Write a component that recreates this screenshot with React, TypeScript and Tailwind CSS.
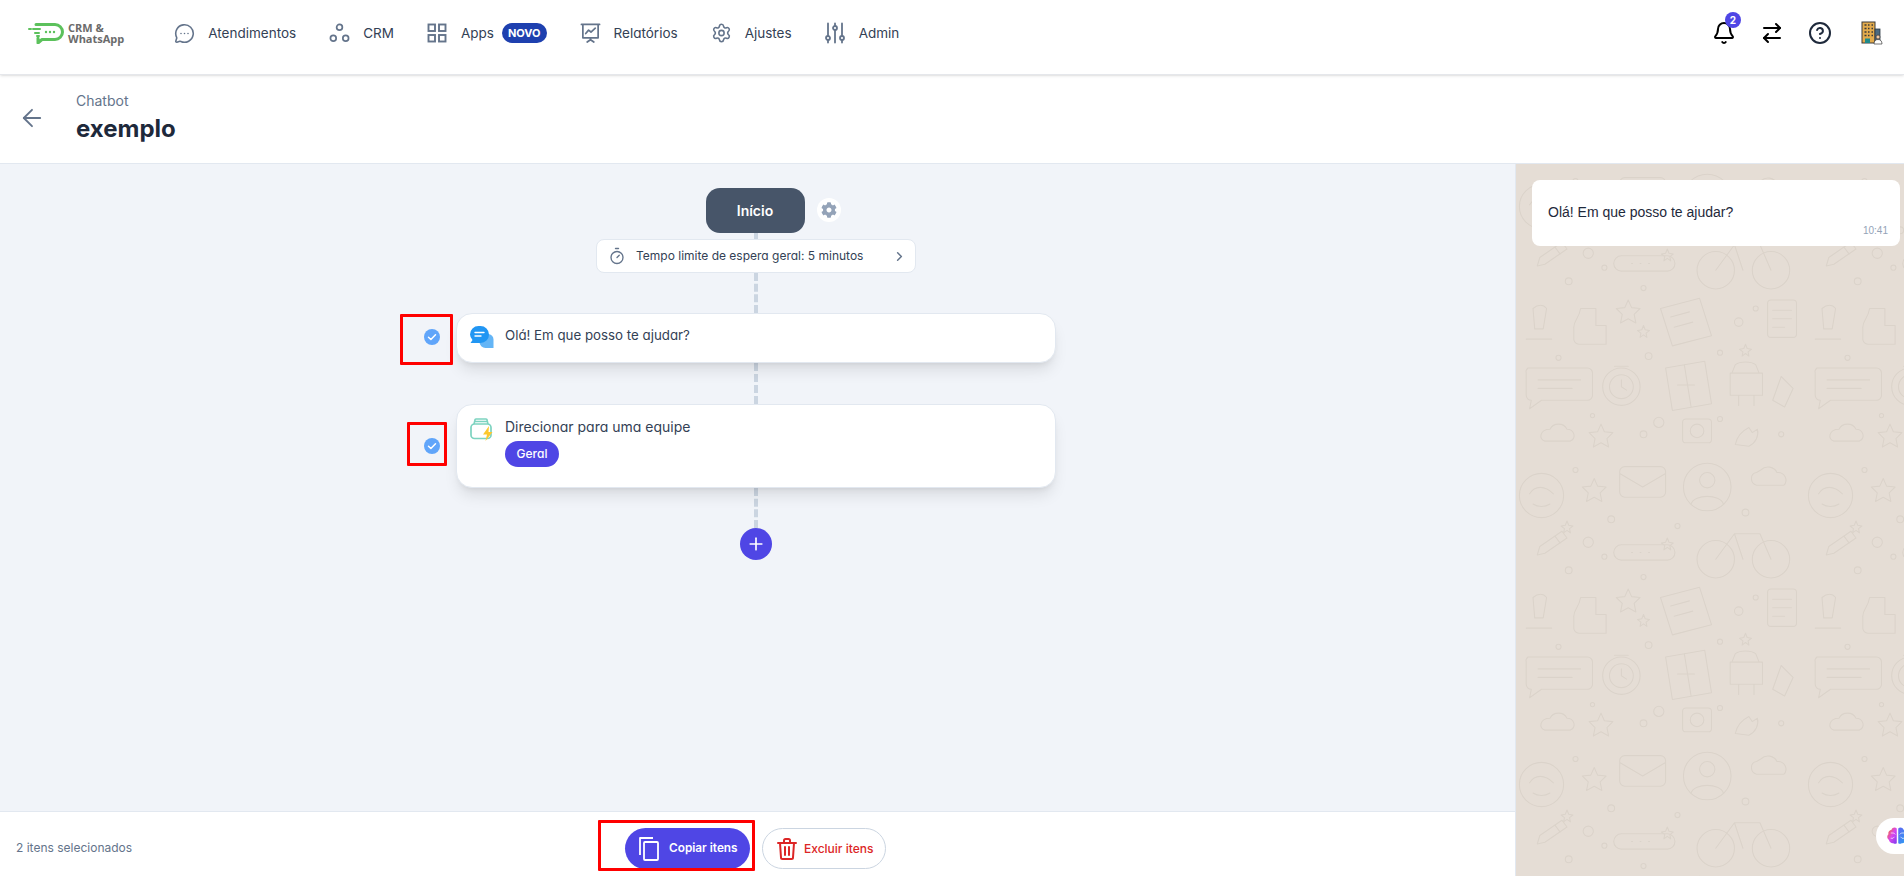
import { ArrowLeft, ArrowRightLeft, Bell, ChevronRight, CircleHelp, MessageCircleMore, Plus, Settings, Timer } from "lucide-react";
import { FaCog } from "react-icons/fa";
import type { ReactNode } from "react";

const CrmIcon = () => (
  <svg width="22" height="22" viewBox="0 0 22 22" fill="none" stroke="#64748b" strokeWidth="1.800">
    <circle cx="11" cy="5" r="3" />
    <circle cx="4.500" cy="16.500" r="3" />
    <circle cx="17.500" cy="16.500" r="3" />
  </svg>
);

const AppsIcon = () => (
  <svg width="20" height="20" viewBox="0 0 20 20" fill="none" stroke="#64748b" strokeWidth="1.900">
    <rect x="1.500" y="1.500" width="6.500" height="6.500" />
    <rect x="12" y="1.500" width="6.500" height="6.500" />
    <rect x="1.500" y="12" width="6.500" height="6.500" />
    <rect x="12" y="12" width="6.500" height="6.500" />
  </svg>
);

const ReportIcon = () => (
  <svg width="22" height="22" viewBox="0 0 22 22" fill="none" stroke="#64748b" strokeWidth="1.800" strokeLinecap="round" strokeLinejoin="round">
    <path d="M1.500 2h19M3 2v14h16V2M11 16v2M7.500 20.500l3.500-2.500 3.500 2.500" />
    <path d="M6 11.500l3-3.500 2.500 2L16 6" />
  </svg>
);

const AdminIcon = () => (
  <svg width="20" height="22" viewBox="0 0 20 22" fill="none" stroke="#64748b" strokeWidth="1.800" strokeLinecap="round">
    <path d="M3 1.500v12.500M3 18v2.500M10 1.500V4M10 8v12.500M17 1.500v12.500M17 18v2.500" />
    <circle cx="3" cy="16" r="2" />
    <circle cx="10" cy="6" r="2" />
    <circle cx="17" cy="16" r="2" />
  </svg>
);

const CopySheetsIcon = () => (
  <svg width="20" height="24" viewBox="0 0 20 24" fill="none" stroke="#fff" strokeWidth="1.800" strokeLinejoin="round">
    <path d="M1 18V1h13" />
    <rect x="5" y="5" width="14" height="18" rx="1" />
  </svg>
);

const TrashIcon = () => (
  <svg width="20" height="22" viewBox="0 0 20 22" fill="none" stroke="#dc2626" strokeWidth="2" strokeLinecap="round" strokeLinejoin="round">
    <path d="M1 5h18M7 5V2.500A1.500 1.500 0 0 1 8.500 1h3A1.500 1.500 0 0 1 13 2.500V5" />
    <path d="M3 5l1 14.500A1.500 1.500 0 0 0 5.500 21h9a1.500 1.500 0 0 0 1.500-1.500L17 5M8 9v8M12 9v8" />
  </svg>
);

const Logo = () => (
  <div className="flex items-center gap-[4px]">
    <svg width="36" height="22" viewBox="0 0 36 22" fill="none">
      <path d="M8 2.500h19a7.500 7.500 0 0 1 0 15H14l-4 3.500v-5" stroke="#5cc15c" strokeWidth="3" strokeLinecap="round" strokeLinejoin="round" />
      <path d="M1 7h2M5 7h7M7 11h4M9 14h2" stroke="#5cc15c" strokeWidth="2" strokeLinecap="round" />
      <circle cx="18" cy="10" r="1.200" fill="#5cc15c" />
      <circle cx="22" cy="10" r="1.200" fill="#5cc15c" />
      <circle cx="26" cy="10" r="1.200" fill="#5cc15c" />
    </svg>
    <div className="font-['Open_Sans',sans-serif] text-[11px] leading-[11px] font-bold text-[#6b6b6b]">
      <div>CRM &amp;</div>
      <div>WhatsApp</div>
    </div>
  </div>
);

const BuildingIcon = () => (
  <svg width="22" height="24" viewBox="0 0 22 24">
    <rect x="1" y="1" width="13" height="21" fill="#e3ab4c" stroke="#3a3a3a" strokeWidth="1" />
    <path d="M3.500 4h2M7 4h1.500M10.500 4h1.500M3.500 7.500h2M7 7.500h1.500M10.500 7.500h1.500M3.500 11h2M7 11h1.500M10.500 11h1.500M3.500 14.500h2M7 14.500h1.500M10.500 14.500h1.500" stroke="#3a3a3a" strokeWidth="1.600" />
    <rect x="4" y="17.500" width="5" height="4.500" fill="#1f8a8a" />
    <rect x="14" y="8" width="5" height="14" fill="#4b6a80" stroke="#2f3a44" strokeWidth="0.800" />
    <circle cx="17" cy="16" r="2" fill="#f1c9a5" stroke="#3a3a3a" strokeWidth="0.700" />
    <path d="M13 23c0-3 1.500-4.500 4-4.500s4 1.500 4 4.500z" fill="#fff" stroke="#3a3a3a" strokeWidth="0.700" />
  </svg>
);

const ChatBubblesIcon = () => (
  <svg width="25" height="24" viewBox="0 0 25 24">
    <path d="M14 9h5a5.500 5.500 0 0 1 5.500 6v8h-8a6 6 0 0 1-6-6z" fill="#64b5f6" />
    <path d="M9.500 1h2A8.500 8.500 0 0 1 20 9.500 8.500 8.500 0 0 1 11.500 18h-10l2-3A8.500 8.500 0 0 1 1 9.500 8.500 8.500 0 0 1 9.500 1z" fill="#2196f3" />
    <path d="M6 7.500h9M6 11h6" stroke="#fff" strokeWidth="1.400" strokeLinecap="round" />
  </svg>
);

const TeamInboxIcon = () => (
  <svg width="23" height="23" viewBox="0 0 23 23" fill="none">
    <path d="M4 6l1-4a1 1 0 0 1 1-1h10a1 1 0 0 1 1 1l1 4M4 3.500h14" stroke="#7dd3c0" strokeWidth="1.600" />
    <rect x="1" y="6" width="20" height="14.500" rx="3.500" stroke="#7dd3c0" strokeWidth="1.700" />
    <path d="M19 8l-6 8.500h4L15.500 23l7-9h-4z" fill="#fdc82f" />
  </svg>
);

const CheckBadge = () => (
  <svg width="16" height="16" viewBox="0 0 16 16" fill="none">
    <circle cx="8" cy="8" r="8" fill="#60a5fa" />
    <path d="M4.500 8.300l2.400 2.200 4.600-4.800" stroke="#fff" strokeWidth="1.500" strokeLinecap="round" strokeLinejoin="round" />
  </svg>
);

const BrainIcon = () => (
  <svg width="21" height="18" viewBox="0 0 28 24" fill="none">
    <defs>
      <linearGradient id="brainLeft" x1="0" y1="0" x2="1" y2="1">
        <stop offset="0" stopColor="#f97316" />
        <stop offset="0.500" stopColor="#d946ef" />
        <stop offset="1" stopColor="#7c3aed" />
      </linearGradient>
      <linearGradient id="brainRight" x1="0" y1="0" x2="1" y2="1">
        <stop offset="0" stopColor="#6366f1" />
        <stop offset="1" stopColor="#22a6f2" />
      </linearGradient>
    </defs>
    <path d="M13 2c-2-2-6-1.500-7 1.500C3 4 1 7 2 9.500c-2.500 2-2 6 .500 7.500.500 3 3.500 5 6 4.500 1.500 1.500 3 1 4.500 0z" fill="url(#brainLeft)" />
    <path d="M15 2c2-2 6-1.500 7 1.500 3 .500 5 3.500 4 6 2.500 2 2 6-.500 7.500-.500 3-3.500 5-6 4.500-1.500 1.500-3 1-4.500 0z" fill="url(#brainRight)" />
    <path d="M5 8h4l2 2M5 15h3l2-2M23 8h-4l-2 2M23 15h-3l-2-2" stroke="#fff" strokeWidth="0.900" />
  </svg>
);

// wallpaper doodles of the chat preview, repeated as one tile
const ChatWallpaper = () => (
  <svg className="absolute inset-0 h-full w-full" aria-hidden>
    <defs>
      <pattern id="doodles" width="340" height="340" patternUnits="userSpaceOnUse" patternTransform="scale(0.85)">
        <g fill="none" stroke="#dbd3ca" strokeWidth="1.300" strokeLinejoin="round" strokeLinecap="round">
          <circle cx="30" cy="50" r="26" />
          <path d="M16 48c6-10 18-10 28 0M20 60c6 4 14 4 20 0" />
          <path d="M92 30l4 9 10 1-7 7 2 10-9-5-9 5 2-10-7-7 10-1z" />
          <path d="M128 16h42a6 6 0 0 1 6 6v24a6 6 0 0 1-6 6h-42a6 6 0 0 1-6-6V22a6 6 0 0 1 6-6zM122 24l27 16 27-16" />
          <circle cx="225" cy="40" r="28" />
          <circle cx="225" cy="32" r="9" />
          <path d="M206 60c4-12 34-12 38 0" />
          <path d="M288 20c6-6 16-4 19 3 9-1 14 9 8 15h-32c-8-2-8-14 0-15z" />
          <path d="M28 110l26-18 6 8-26 18-9 2zM46 98l6 8" />
          <circle cx="85" cy="105" r="6" />
          <circle cx="104" cy="122" r="3" />
          <path d="M124 108h54a9 9 0 0 1 0 18h-54a9 9 0 0 1 0-18zM136 117h1M146 117h1M156 117h1" />
          <circle cx="235" cy="125" r="22" />
          <circle cx="300" cy="125" r="22" />
          <path d="M235 125l22-30h30l13 30M257 95l10 30" />
          <path d="M20 170c6-5 12-5 16 0l-4 24h-10zM12 206h30" />
          <path d="M76 170l18 0 0 20 12 0 0 22-32 0a6 6 0 0 1-6-6v-14c0-8 6-10 8-22z" />
          <path d="M132 160l4 9 10 1-7 7 2 10-9-5-9 5 2-10-7-7 10-1z" />
          <path d="M170 170l46-12 14 44-46 12zM182 180l22-6M186 192l22-6" />
          <circle cx="262" cy="186" r="5" />
          <circle cx="282" cy="170" r="3" />
          <rect x="296" y="160" width="34" height="44" rx="4" />
          <path d="M302 172h22M302 182h22M302 192h14" />
          <path d="M14 240h70a6 6 0 0 1 6 6v26a6 6 0 0 1-6 6H30l-14 10 2-10a6 6 0 0 1-6-6v-26a6 6 0 0 1 2-6zM26 254h50M26 264h40" />
          <circle cx="124" cy="262" r="22" />
          <circle cx="124" cy="262" r="14" />
          <path d="M124 254v8l6 4M116 238h16" />
          <path d="M176 240l46-8 8 50-46 8zM198 236l8 50M190 260h20" />
          <path d="M258 236c6-4 18-4 24 0l4 10h-32zM252 246h38v26h-38zM262 272v12M280 272v12" />
          <path d="M312 250l14 14-10 22-14-8z" />
          <path d="M40 312c4-8 16-8 20 0 8 0 12 10 4 14H34c-8-2-6-14 6-14z" />
          <path d="M100 306l4 9 10 1-7 7 2 10-9-5-9 5 2-10-7-7 10-1z" />
          <circle cx="150" cy="318" r="4" />
          <circle cx="168" cy="304" r="6" />
          <rect x="196" y="300" width="34" height="28" rx="4" />
          <circle cx="213" cy="314" r="8" />
          <path d="M258 330c2-10 8-16 16-20l4 6 6-4c2 8-2 16-10 20z" />
          <circle cx="312" cy="318" r="3" />
          <circle cx="70" cy="20" r="3" />
          <circle cx="112" cy="78" r="4" />
          <circle cx="190" cy="86" r="3" />
          <circle cx="270" cy="70" r="4" />
          <circle cx="62" cy="138" r="4" />
          <circle cx="150" cy="146" r="3" />
          <circle cx="50" cy="228" r="3" />
          <circle cx="156" cy="226" r="4" />
          <circle cx="240" cy="222" r="3" />
          <circle cx="90" cy="296" r="2.500" />
          <circle cx="240" cy="300" r="3" />
          <path d="M178 100l2 5 5 1-4 3 1 5-4-3-4 3 1-5-4-3 5-1zM60 80l2 5 5 1-4 3 1 5-4-3-4 3 1-5-4-3 5-1zM270 212l2 5 5 1-4 3 1 5-4-3-4 3 1-5-4-3 5-1zM150 190l2 5 5 1-4 3 1 5-4-3-4 3 1-5-4-3 5-1z" />
        </g>
      </pattern>
    </defs>
    <rect width="100%" height="100%" fill="url(#doodles)" />
  </svg>
);

const RedMark = ({ className }: { className: string }) => (
  <div className={`absolute rounded-[1px] border-[3px] border-[#f00] ${className}`} />
);

const NavItem = ({ icon, label, children }: { icon: ReactNode; label: string; children?: ReactNode }) => (
  <div className="flex items-center gap-[13px]">
    <div className="flex w-[21px] items-center justify-center">{icon}</div>
    <span className="text-[13.5px] text-[#334155] [font-feature-settings:'cv11']">{label}</span>
    {children}
  </div>
);

const Connector = ({ height }: { height: string }) => (
  <div className={`w-0 border-l-[4px] border-dashed border-[#cbd5e1] ${height}`} />
);

export default function App() {
  return (
    <div className="relative flex h-[876px] w-[1904px] flex-col overflow-hidden bg-white font-['Inter',sans-serif]">
      <header className="flex h-[75px] shrink-0 items-center justify-between border-b border-[#e5e7eb] pr-[21px] pb-[8px] pl-[28px] shadow-sm">
        <div className="flex items-center">
          <Logo />
          <nav className="ml-[50px] flex items-center gap-[33px]">
            <NavItem label="Atendimentos" icon={<MessageCircleMore className="size-[23px] text-[#64748b]" strokeWidth={1.8} />} />
            <NavItem label="CRM" icon={<CrmIcon />} />
            <NavItem label="Apps" icon={<AppsIcon />}>
              <span className="-ml-[5px] rounded-full bg-[#1e40af] px-[6px] py-[3px] text-[11px] leading-[14px] font-bold text-white">NOVO</span>
            </NavItem>
            <NavItem label="Relatórios" icon={<ReportIcon />} />
            <NavItem label="Ajustes" icon={<Settings className="size-[24px] text-[#64748b]" strokeWidth={1.8} />} />
            <NavItem label="Admin" icon={<AdminIcon />} />
          </nav>
        </div>
        <div className="flex items-center">
          <div className="relative">
            <Bell className="size-[24px] text-black" strokeWidth={2} />
            <span className="absolute -top-[9px] -right-[5px] flex size-[16px] items-center justify-center rounded-full bg-[#4f46e5] text-[10px] font-bold text-white">2</span>
          </div>
          <ArrowRightLeft className="ml-[24px] size-[24px] text-black" strokeWidth={2} />
          <CircleHelp className="ml-[24px] size-[24px] text-[#1e293b]" strokeWidth={2} />
          <div className="ml-[29px]"><BuildingIcon /></div>
        </div>
      </header>

      <div className="flex h-[89px] shrink-0 items-center border-b border-[#e2e8f0] pb-[2px] pl-[18px]">
        <ArrowLeft className="size-[28px] text-[#64748b]" strokeWidth={1.6} />
        <div className="ml-[30px]">
          <div className="text-sm leading-[20px] text-[#64748b]">Chatbot</div>
          <div className="mt-[2px] text-2xl leading-[32px] font-bold text-[#1e293b]">exemplo</div>
        </div>
      </div>

      <div className="flex min-h-0 flex-1">
        <div className="flex w-[1515px] flex-col">
          <main className="flex flex-1 flex-col items-center bg-[#f1f4f9] pt-[24px] pr-[3px]">
            <div className="relative -ml-[2px]">
              <div className="flex h-[45px] w-[99px] items-center justify-center rounded-[14px] bg-[#475569] text-sm font-semibold text-white">Início</div>
              <div className="absolute top-[10px] -right-[36px] flex size-[24px] items-center justify-center rounded-full bg-white">
                <FaCog className="size-[16px] text-[#94a3b8]" />
              </div>
            </div>
            <Connector height="h-[6px]" />
            <div className="flex h-[34px] w-[320px] items-center rounded-lg border border-[#e2e8f0] bg-white pr-[8px] pl-[11px] text-xs text-[#334155] [font-feature-settings:'cv11']">
              <Timer className="size-[18px] text-[#64748b]" strokeWidth={1.8} />
              <span className="ml-[10px] flex-1">Tempo limite de espera geral: 5 minutos</span>
              <ChevronRight className="size-[15px] text-[#64748b]" strokeWidth={2.4} />
            </div>
            <Connector height="h-[40px]" />
            <div className="relative flex h-[50px] w-[600px] rounded-[16px] border border-[#e2e8f0] bg-white pt-[11px] pl-[12px] shadow-lg">
              <div className="absolute top-[15px] -left-[33px]"><CheckBadge /></div>
              <ChatBubblesIcon />
              <span className="ml-[11px] text-[13.3px] leading-[20px] text-[#334155] [font-feature-settings:'cv11']">Olá! Em que posso te ajudar?</span>
            </div>
            <Connector height="h-[41px]" />
            <div className="relative flex h-[84px] w-[600px] rounded-[16px] border border-[#e2e8f0] bg-white pt-[12px] pl-[13px] shadow-lg">
              <div className="absolute top-[33px] -left-[33px]"><CheckBadge /></div>
              <div className="mt-[1px]"><TeamInboxIcon /></div>
              <div className="ml-[12px] flex flex-col items-start">
                <span className="text-sm leading-[20px] text-[#334155] [font-feature-settings:'cv11']">Direcionar para uma equipe</span>
                <span className="mt-[4px] flex h-[26px] w-[54px] items-center justify-center rounded-full bg-[#4f46e5] text-xs font-medium text-white [font-feature-settings:'cv11']">Geral</span>
              </div>
            </div>
            <Connector height="h-[40px]" />
            <div className="flex size-[32px] items-center justify-center rounded-full bg-[#4f46e5]">
              <Plus className="size-[20px] text-white" strokeWidth={2} />
            </div>
          </main>
          <footer className="relative flex h-[65px] shrink-0 items-center border-t border-[#e2e8f0] bg-white pt-[8px] pl-[16px]">
            <span className="text-xs text-[#64748b]">2 itens selecionados</span>
            <div className="absolute top-[16px] left-[625px] flex gap-[12px]">
              <button className="flex h-[41px] w-[125px] items-center rounded-full bg-[#4f46e5] pl-[14px] text-[11.800px] font-semibold text-white">
                <CopySheetsIcon />
                <span className="ml-[10px]">Copiar itens</span>
              </button>
              <button className="flex h-[41px] w-[124px] items-center rounded-full border border-[#cbd5e1] bg-white pl-[14px] text-xs font-medium text-[#dc2626]">
                <TrashIcon />
                <span className="ml-[7px]">Excluir itens</span>
              </button>
            </div>
          </footer>
        </div>

        <aside className="relative flex-1 border-l border-[#e2e8f0] bg-[#e5ddd5] pt-[16px] pr-[4px] pl-[16px]">
          <ChatWallpaper />
          <div className="relative h-[66px] rounded-lg bg-white px-[16px] pt-[22px] font-['Liberation_Sans',sans-serif]">
            <p className="text-sm leading-[20px] text-[#1e293b]">Olá! Em que posso te ajudar?</p>
            <p className="absolute right-[12px] bottom-[8px] text-[10px] leading-[14px] text-[#94a3b8]">10:41</p>
          </div>
          <div className="absolute top-[654px] right-0 flex h-[36px] w-[28px] items-center rounded-l-full bg-white pl-[11px]">
            <div className="shrink-0"><BrainIcon /></div>
          </div>
        </aside>
      </div>

      <RedMark className="top-[314px] left-[400px] h-[51px] w-[53px]" />
      <RedMark className="top-[422px] left-[407px] h-[44px] w-[40px]" />
      <RedMark className="top-[820px] left-[598px] h-[51px] w-[157px]" />
    </div>
  );
}
